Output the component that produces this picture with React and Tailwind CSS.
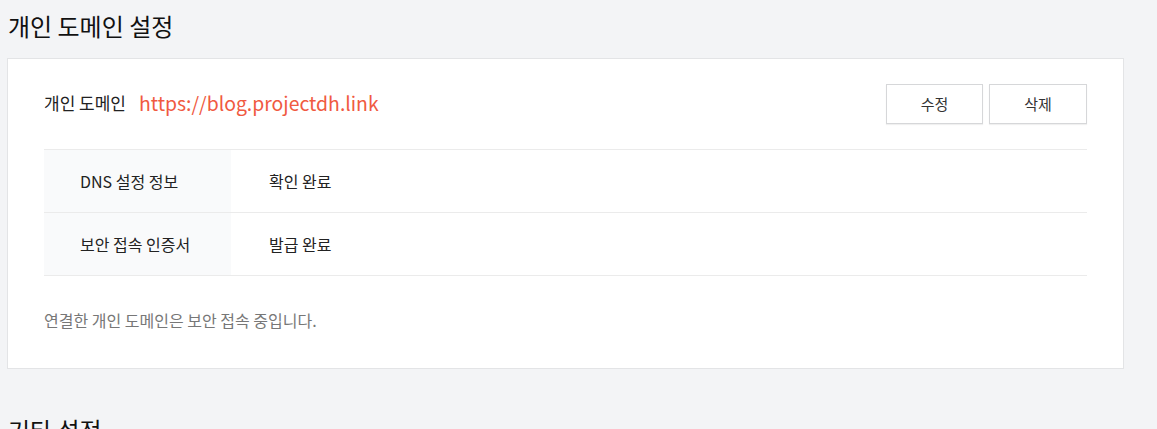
export default function App() {
  const font = { fontFamily: '"Noto Sans CJK KR", "Noto Sans", sans-serif' };
  return (
    <div className="min-h-[429px] w-full bg-[#f3f4f6] overflow-hidden" style={font}>
      <div className="pl-[7px] pr-[33px] pt-[9px]">
        <h2 className="pl-[1px] text-[24px] leading-[34px] text-[#111] font-normal">개인 도메인 설정</h2>
        <div className="mt-[15px] border border-[#e3e4e6] bg-white px-[36px] pt-[25px] pb-[38px]">
          <div className="flex items-center justify-between h-[40px]">
            <div className="flex items-center -mt-[2px]">
              <span className="text-[17px] text-[#222]">개인 도메인</span>
              <span className="ml-[13px] text-[19.4px] text-[#f05a41]">https://blog.projectdh.link</span>
            </div>
            <div className="flex gap-[6px]">
              <button className="w-[97px] h-[40px] border border-[#d6d7d9] bg-white text-[15px] text-[#333] shadow-[0_1px_1px_rgba(0,0,0,0.06)]">수정</button>
              <button className="w-[98px] h-[40px] border border-[#d6d7d9] bg-white text-[15px] text-[#333] shadow-[0_1px_1px_rgba(0,0,0,0.06)]">삭제</button>
            </div>
          </div>
          <div className="mt-[25px] border-t border-[#ebebeb]">
            <div className="flex h-[63px] border-b border-[#ebebeb]">
              <div className="w-[187px] bg-[#f9fafb] flex items-center pl-[36px] text-[16px] text-[#222]">DNS 설정 정보</div>
              <div className="flex items-center pl-[38px] text-[16px] text-[#222]">확인 완료</div>
            </div>
            <div className="flex h-[63px] border-b border-[#ebebeb]">
              <div className="w-[187px] bg-[#f9fafb] flex items-center pl-[36px] text-[16px] text-[#222]">보안 접속 인증서</div>
              <div className="flex items-center pl-[38px] text-[16px] text-[#222]">발급 완료</div>
            </div>
          </div>
          <p className="mt-[34px] text-[16px] leading-[20px] text-[#777]">연결한 개인 도메인은 보안 접속 중입니다.</p>
        </div>
        <h2 className="mt-[44px] pl-[1px] text-[24px] leading-[34px] text-[#111] font-normal">기타 설정</h2>
      </div>
    </div>
  );
}
